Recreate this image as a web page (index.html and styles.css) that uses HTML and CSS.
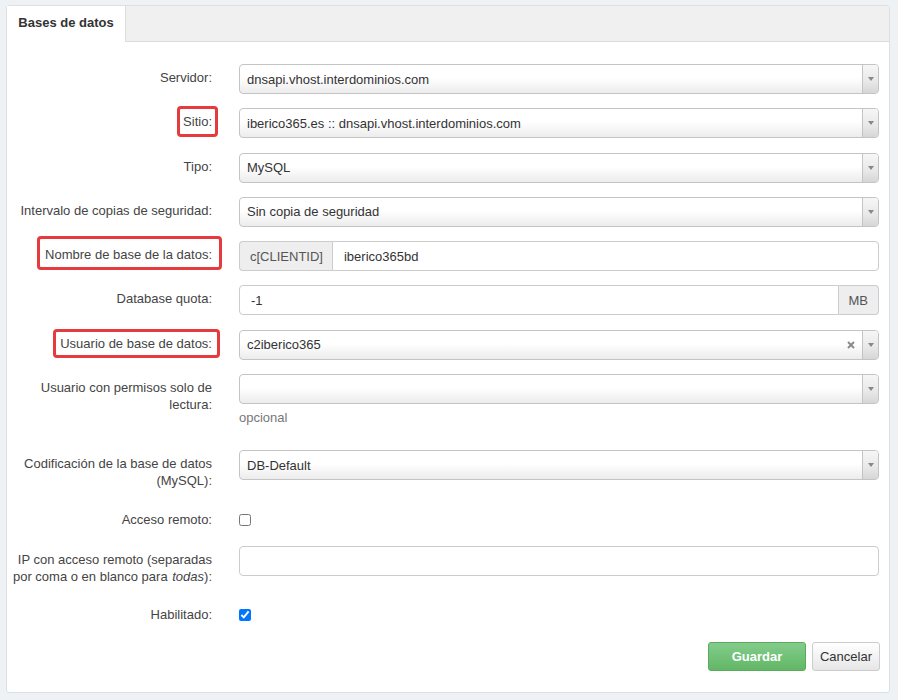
FILE: index.html
```html
<!DOCTYPE html>
<html lang="es">
<head>
    <meta charset="UTF-8">
    <meta name="viewport" content="width=device-width, initial-scale=1.0">
    <title>Bases de datos</title>
    <link rel="stylesheet" href="styles.css">
</head>
<body>
    <div class="panel">
        <div class="tabs">
            <div class="tab active">Bases de datos</div>
        </div>

        <form class="form">
            <div class="row">
                <label class="label">Servidor:</label>
                <div class="field">
                    <div class="select"><span class="value">dnsapi.vhost.interdominios.com</span><span class="arrow"></span></div>
                </div>
            </div>

            <div class="row">
                <label class="label"><span class="mark mark-sitio">Sitio:</span></label>
                <div class="field">
                    <div class="select"><span class="value">iberico365.es :: dnsapi.vhost.interdominios.com</span><span class="arrow"></span></div>
                </div>
            </div>

            <div class="row">
                <label class="label">Tipo:</label>
                <div class="field">
                    <div class="select"><span class="value">MySQL</span><span class="arrow"></span></div>
                </div>
            </div>

            <div class="row">
                <label class="label">Intervalo de copias de seguridad:</label>
                <div class="field">
                    <div class="select"><span class="value">Sin copia de seguridad</span><span class="arrow"></span></div>
                </div>
            </div>

            <div class="row">
                <label class="label"><span class="mark mark-nombre">Nombre de base de la datos:</span></label>
                <div class="field">
                    <div class="group">
                        <span class="addon addon-left">c[CLIENTID]</span>
                        <input class="input input-grouped" type="text" value="iberico365bd">
                    </div>
                </div>
            </div>

            <div class="row">
                <label class="label">Database quota:</label>
                <div class="field">
                    <div class="group">
                        <input class="input input-grouped-left" type="text" value="-1">
                        <span class="addon addon-right">MB</span>
                    </div>
                </div>
            </div>

            <div class="row">
                <label class="label"><span class="mark mark-usuario">Usuario de base de datos:</span></label>
                <div class="field">
                    <div class="select">
                        <span class="value">c2iberico365</span>
                        <span class="clear">
                            <svg width="8" height="8" viewBox="0 0 8 8"><path d="M1 1L7 7M7 1L1 7" stroke="#8a8a8a" stroke-width="2"/></svg>
                        </span>
                        <span class="arrow"></span>
                    </div>
                </div>
            </div>

            <div class="row">
                <label class="label">Usuario con permisos solo de lectura:</label>
                <div class="field">
                    <div class="select"><span class="value"></span><span class="arrow"></span></div>
                    <p class="help">opcional</p>
                </div>
            </div>

            <div class="row">
                <label class="label">Codificación de la base de datos (MySQL):</label>
                <div class="field">
                    <div class="select"><span class="value">DB-Default</span><span class="arrow"></span></div>
                </div>
            </div>

            <div class="row row-check">
                <label class="label">Acceso remoto:</label>
                <div class="field field-check">
                    <input type="checkbox">
                </div>
            </div>

            <div class="row">
                <label class="label">IP con acceso remoto (separadas por coma o en blanco para <em>todas</em>):</label>
                <div class="field">
                    <input class="input" type="text" value="">
                </div>
            </div>

            <div class="row row-check">
                <label class="label">Habilitado:</label>
                <div class="field field-check">
                    <input type="checkbox" checked>
                </div>
            </div>

            <div class="actions">
                <button type="button" class="btn btn-save">Guardar</button>
                <button type="button" class="btn btn-cancel">Cancelar</button>
            </div>
        </form>
    </div>
</body>
</html>
```

FILE: styles.css
```css
body {
    margin: 0;
    background: #eff2f5;
    font-family: "Liberation Sans", Arial, sans-serif;
    font-size: 13px;
    color: #444;
}
.panel {
    margin: 5px 8px 8px 6px;
    background: #fff;
    border: 1px solid #dcdfe3;
    border-radius: 3px;
}
.tabs {
    display: flex;
    height: 35px;
    background: #f0f0f0;
    border-bottom: 1px solid #dcdcdc;
}
.tab {
    width: 118px;
    text-align: center;
    line-height: 34px;
    font-weight: bold;
    color: #333;
}
.tab.active {
    background: #fff;
    border-right: 1px solid #dcdcdc;
    margin-bottom: -1px;
    height: 36px;
}
.form {
    padding: 22px 10px 21px 5px;
}
.row {
    display: grid;
    grid-template-columns: 200px 640px;
    column-gap: 27px;
    margin-bottom: 14.3px;
}
.label {
    text-align: right;
    padding-top: 5px;
    line-height: 17px;
    color: #444;
}
.row-check .label {
    padding-top: 7px;
}
.label em {
    padding-left: 1px;
}
.mark {
    position: relative;
}
.mark::after {
    content: "";
    position: absolute;
    border: 3px solid #e53a3e;
    border-radius: 4px;
}
.mark-sitio::after {
    top: -8px;
    bottom: -8px;
    left: -6px;
    right: -6px;
}
.mark-nombre::after {
    top: -11px;
    bottom: -8px;
    left: -8px;
    right: -10px;
}
.mark-usuario::after {
    top: -7px;
    bottom: -7px;
    left: -7px;
    right: -8px;
}
.select {
    display: flex;
    align-items: center;
    height: 30px;
    box-sizing: border-box;
    border: 1px solid #c4c4c4;
    border-radius: 4px;
    background: linear-gradient(to bottom, #fff 0%, #fff 45%, #ececec 100%);
    color: #333;
}
.value {
    flex: 1;
    padding-left: 7px;
    white-space: nowrap;
    overflow: hidden;
}
.clear {
    display: flex;
    width: 22px;
    justify-content: center;
}
.arrow {
    position: relative;
    width: 15px;
    height: 100%;
    border-left: 1px solid #c4c4c4;
    border-radius: 0 3px 3px 0;
    background: linear-gradient(to bottom, #f6f6f6 0%, #e8e8e8 60%, #d6d6d6 100%);
}
.arrow::after {
    content: "";
    position: absolute;
    left: 5px;
    top: 12px;
    border-left: 3px solid transparent;
    border-right: 3px solid transparent;
    border-top: 4px solid #888;
}
.input {
    display: block;
    width: 100%;
    height: 30px;
    box-sizing: border-box;
    border: 1px solid #ccc;
    border-radius: 4px;
    padding: 0 11px;
    font-family: inherit;
    font-size: 13px;
    color: #333;
    background: #fff;
}
.group {
    display: flex;
    height: 30px;
}
.group .input {
    flex: 1;
    width: auto;
}
.addon {
    display: flex;
    align-items: center;
    box-sizing: border-box;
    height: 30px;
    background: #eee;
    border: 1px solid #ccc;
    color: #555;
}
.addon-left {
    padding: 0 9px 0 10px;
    border-radius: 4px 0 0 4px;
    border-right: none;
}
.addon-right {
    padding: 0 10px;
    border-radius: 0 4px 4px 0;
    border-left: none;
}
.input-grouped {
    border-radius: 0 4px 4px 0;
}
.input-grouped-left {
    border-radius: 4px 0 0 4px;
}
.help {
    margin: 5px 0 9px;
    line-height: 18px;
    color: #777;
}
.field-check {
    min-height: 28px;
    box-sizing: border-box;
    padding-top: 10px;
}
.field-check input {
    display: block;
    margin: 0;
    width: 12px;
    height: 12px;
}
.actions {
    display: flex;
    justify-content: flex-end;
    gap: 6px;
    margin-right: -1px;
}
.btn {
    height: 29px;
    box-sizing: border-box;
    border-radius: 3px;
    font-family: inherit;
    font-size: 13px;
    cursor: pointer;
}
.btn-save {
    width: 98px;
    border: 1px solid #5aaa5e;
    background: linear-gradient(to bottom, #82cc8b 0%, #62b766 100%);
    color: #fff;
    font-weight: bold;
}
.btn-cancel {
    padding: 0 7px;
    border: 1px solid #ccc;
    background: linear-gradient(to bottom, #fff 0%, #e6e6e6 100%);
    color: #333;
}
```
